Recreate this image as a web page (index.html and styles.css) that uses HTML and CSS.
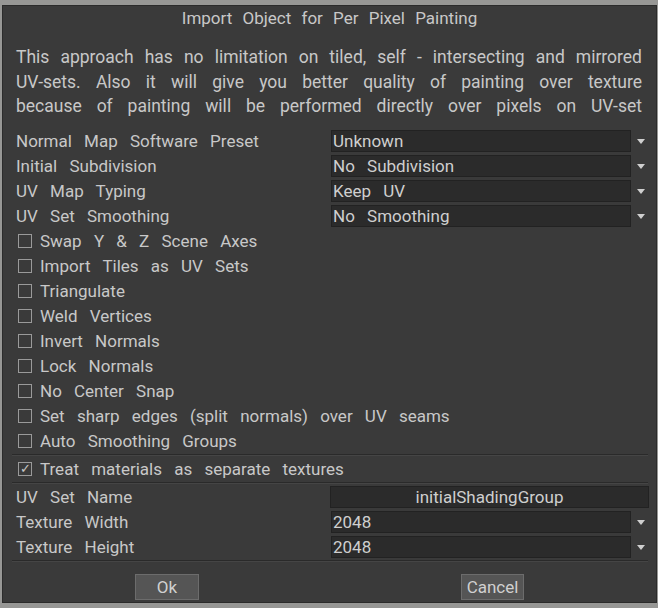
FILE: index.html
```html
<!DOCTYPE html>
<html lang="en">
<head>
  <meta charset="UTF-8">
  <title>Import Object for Per Pixel Painting</title>
  <link rel="stylesheet" href="styles.css">
</head>
<body>
  <div class="dialog">
    <div class="title">Import Object for Per Pixel Painting</div>

    <p class="note">This approach has no limitation on tiled, self - intersecting and mirrored<br>UV-sets. Also it will give you better quality of painting over texture<br>because of painting will be performed directly over pixels on UV-set</p>

    <div class="row">
      <span class="label">Normal Map Software Preset</span>
      <span class="select">Unknown</span>
      <span class="arrow"></span>
    </div>
    <div class="row">
      <span class="label">Initial Subdivision</span>
      <span class="select">No Subdivision</span>
      <span class="arrow"></span>
    </div>
    <div class="row">
      <span class="label">UV Map Typing</span>
      <span class="select">Keep UV</span>
      <span class="arrow"></span>
    </div>
    <div class="row">
      <span class="label">UV Set Smoothing</span>
      <span class="select">No Smoothing</span>
      <span class="arrow"></span>
    </div>

    <div class="row check"><span class="box"></span>Swap Y &amp; Z Scene Axes</div>
    <div class="row check"><span class="box"></span>Import Tiles as UV Sets</div>
    <div class="row check"><span class="box"></span>Triangulate</div>
    <div class="row check"><span class="box"></span>Weld Vertices</div>
    <div class="row check"><span class="box"></span>Invert Normals</div>
    <div class="row check"><span class="box"></span>Lock Normals</div>
    <div class="row check"><span class="box"></span>No Center Snap</div>
    <div class="row check"><span class="box"></span>Set sharp edges (split normals) over UV seams</div>
    <div class="row check"><span class="box"></span>Auto Smoothing Groups</div>

    <div class="sep"></div>
    <div class="row check"><span class="box checked">&#10003;</span>Treat materials as separate textures</div>
    <div class="sep"></div>

    <div class="row">
      <span class="label">UV Set Name</span>
      <span class="input">initialShadingGroup</span>
    </div>
    <div class="row">
      <span class="label">Texture Width</span>
      <span class="select">2048</span>
      <span class="arrow"></span>
    </div>
    <div class="row">
      <span class="label">Texture Height</span>
      <span class="select">2048</span>
      <span class="arrow"></span>
    </div>

    <div class="sep"></div>

    <div class="buttons">
      <button class="btn btn-ok">Ok</button>
      <button class="btn btn-cancel">Cancel</button>
    </div>
  </div>
</body>
</html>
```

FILE: styles.css
```css
body {
  margin: 0;
  background: #979795;
  font-family: Roboto, "Liberation Sans", sans-serif;
  color: #c8c8c8;
}

.dialog {
  margin: 5px 1px 0 2px;
  height: 598px;
  background: #3a3a3a;
  border: 1px solid #2b2b2b;
  box-sizing: border-box;
  display: flex;
  flex-direction: column;
}

.title {
  height: 39px;
  line-height: 24px;
  text-align: center;
  font-size: 17px;
  word-spacing: 6px;
}

.note {
  margin: 0 14px 10px 13px;
  font-size: 17.5px;
  line-height: 24.5px;
  text-align: justify;
  text-align-last: justify;
}

.row {
  height: 25px;
  flex-shrink: 0;
  display: flex;
  align-items: center;
  padding-left: 13px;
  font-size: 17px;
  word-spacing: 8px;
}

.label {
  width: 315px;
  flex-shrink: 0;
}

.select {
  width: 300px;
  height: 22px;
  box-sizing: border-box;
  background: #2b2b2b;
  border: 1px solid #222222;
  line-height: 20px;
  padding-left: 1px;
  color: #cfcfcf;
}

.arrow {
  width: 0;
  height: 0;
  margin-left: 6px;
  border-left: 4px solid transparent;
  border-right: 4px solid transparent;
  border-top: 5px solid #cfcfcf;
}

.input {
  width: 319px;
  height: 22px;
  box-sizing: border-box;
  background: #2b2b2b;
  border: 1px solid #222222;
  line-height: 20px;
  text-align: center;
  margin-left: -1px;
  color: #cfcfcf;
  word-spacing: 0;
}

.check .box {
  width: 12px;
  height: 12px;
  border: 1px solid #9a9a9a;
  margin: 0 8px 0 2px;
  font-size: 13px;
  line-height: 12px;
  text-align: center;
  color: #c8c8c8;
  word-spacing: 0;
}

.sep {
  flex-shrink: 0;
  margin: 0 8px 1px 9px;
  height: 1px;
  background: #2a2a2a;
  border-bottom: 1px solid #454545;
}

.buttons {
  flex: 1;
  display: flex;
  align-items: flex-end;
  padding-bottom: 2px;
}

.btn {
  height: 26px;
  background: #555555;
  border: 1px solid #6c6c6c;
  color: #d0d0d0;
  font-family: Roboto, "Liberation Sans", sans-serif;
  font-size: 17px;
  padding: 0;
}

.btn-ok {
  width: 64px;
  margin-left: 132px;
}

.btn-cancel {
  width: 63px;
  margin-left: 262px;
}
```
